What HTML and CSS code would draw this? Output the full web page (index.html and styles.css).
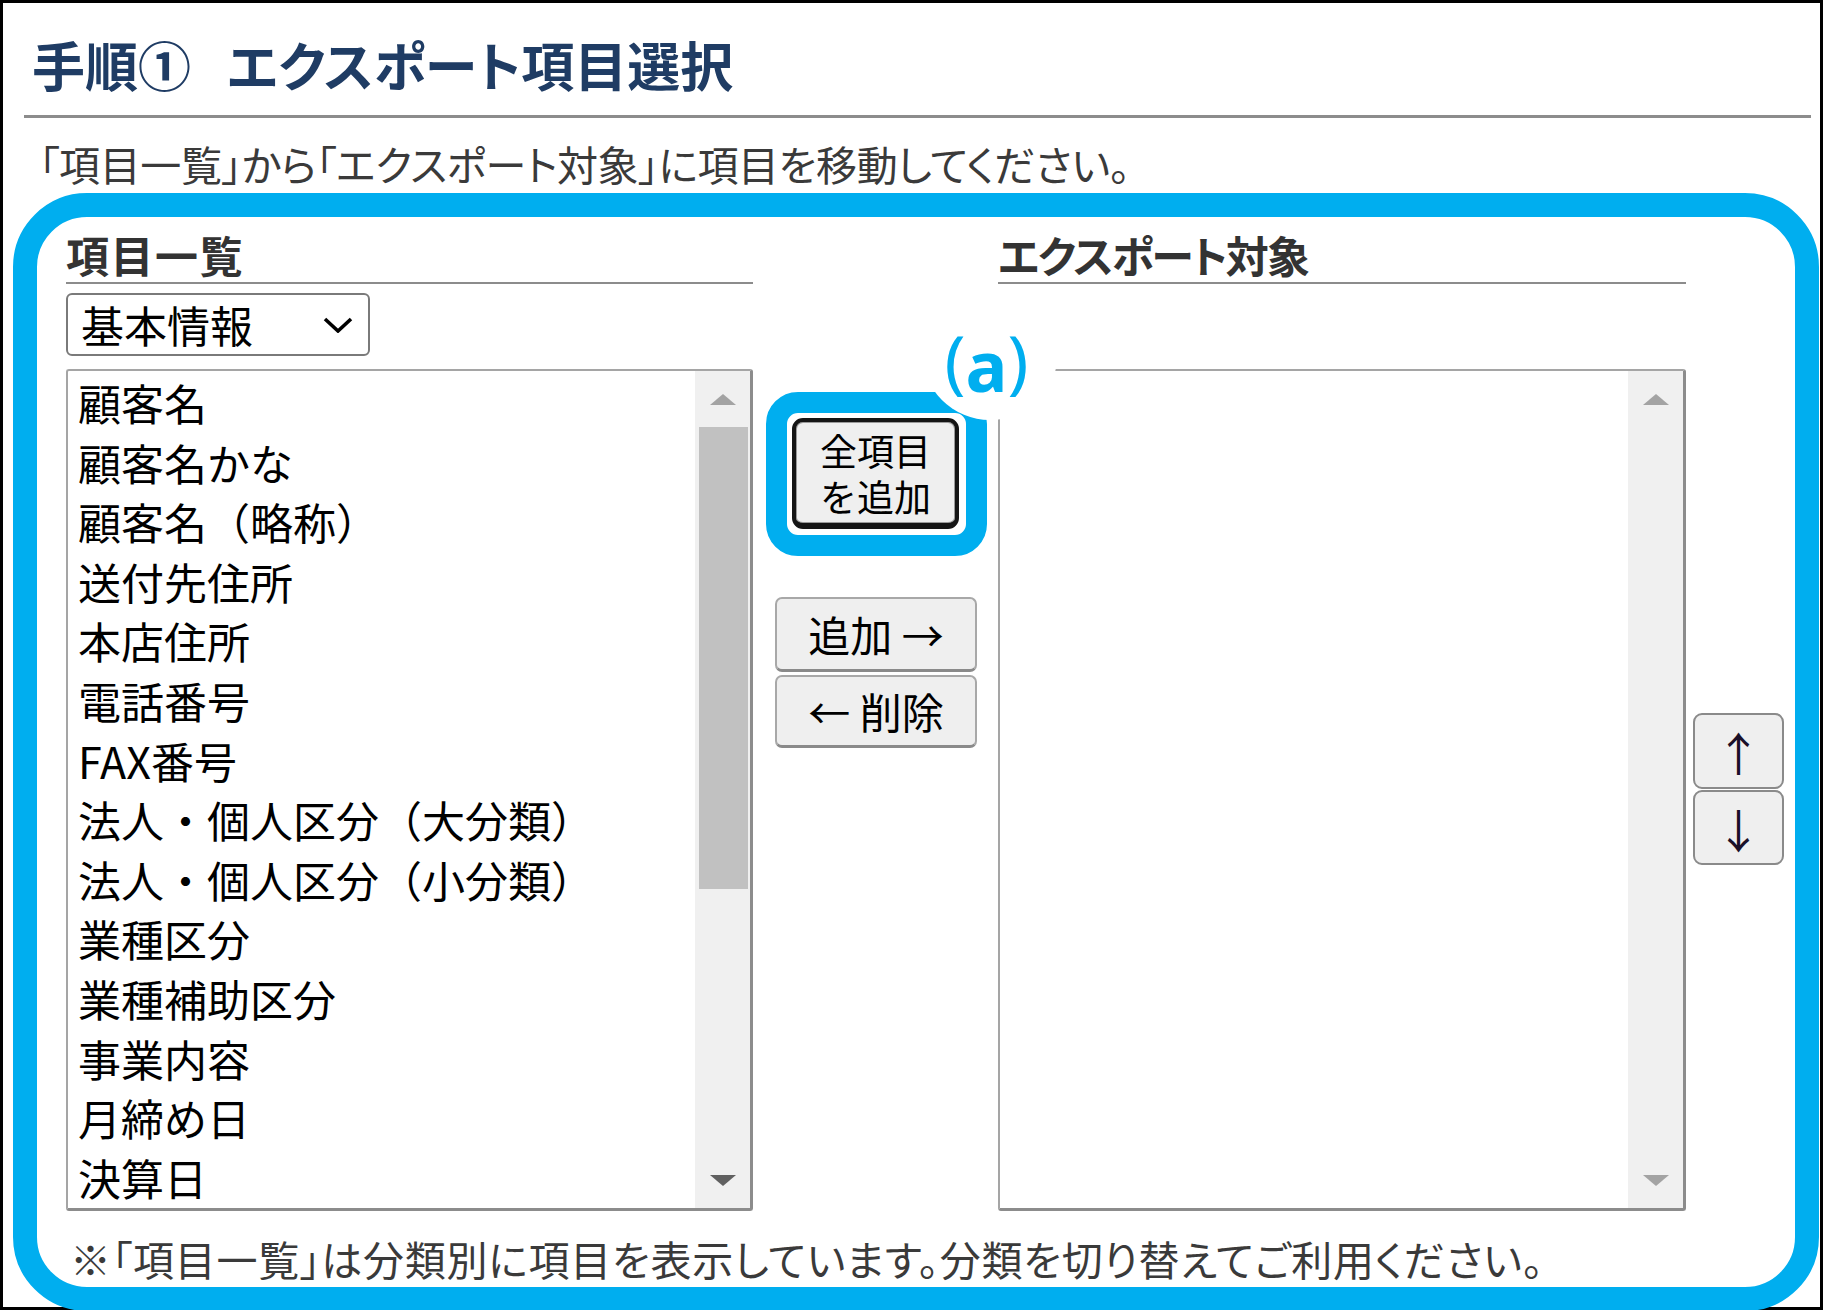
FILE: index.html
```html
<!DOCTYPE html>
<html lang="ja">
<head>
<meta charset="utf-8">
<title>手順① エクスポート項目選択</title>
<link rel="stylesheet" href="styles.css">
</head>
<body>
<div class="frame">
  <h1 class="title"><span class="step">手順①</span>エクスポート項目選択</h1>
  <div class="rule"></div>
  <p class="lead">「項目一覧」から「エクスポート対象」に項目を移動してください。</p>
  <section class="panel">
    <div class="cols">
      <div class="col col-src">
        <h2 class="col-head head-src">項目一覧</h2>
        <div class="select">
          <span>基本情報</span>
          <svg class="chev" viewBox="0 0 30 16"><polyline points="2,2 15,14 28,2" fill="none" stroke="#000" stroke-width="3.6"/></svg>
        </div>
        <div class="listbox">
          <ul class="items">
            <li>顧客名</li>
            <li>顧客名かな</li>
            <li>顧客名（略称）</li>
            <li>送付先住所</li>
            <li>本店住所</li>
            <li>電話番号</li>
            <li>FAX番号</li>
            <li>法人・個人区分（大分類）</li>
            <li>法人・個人区分（小分類）</li>
            <li>業種区分</li>
            <li>業種補助区分</li>
            <li>事業内容</li>
            <li>月締め日</li>
            <li>決算日</li>
          </ul>
          <div class="scroll">
            <div class="sbtn"><span class="tri-up"></span></div>
            <div class="thumb"></div>
            <div class="rest"></div>
            <div class="sbtn"><span class="tri-down dark"></span></div>
          </div>
        </div>
      </div>
      <div class="col col-mid">
        <div class="focus-box">
          <button class="btn btn-all"><span>全項目</span><span>を追加</span></button>
          <div class="badge">(<b>a</b>)</div>
        </div>
        <div class="move-pair">
          <button class="btn btn-move">追加 →</button>
          <button class="btn btn-move second">← 削除</button>
        </div>
      </div>
      <div class="col col-dst">
        <h2 class="col-head head-dst">エクスポート対象</h2>
        <div class="listbox listbox-dst">
          <ul class="items"></ul>
          <div class="scroll">
            <div class="sbtn"><span class="tri-up"></span></div>
            <div class="rest"></div>
            <div class="sbtn"><span class="tri-down"></span></div>
          </div>
        </div>
      </div>
      <div class="col col-order">
        <button class="btn btn-order">↑</button>
        <button class="btn btn-order second">↓</button>
      </div>
    </div>
    <p class="note">※「項目一覧」は分類別に項目を表示しています。分類を切り替えてご利用ください。</p>
  </section>
</div>
</body>
</html>
```
FILE: styles.css
```css
html, body {
  margin: 0;
  padding: 0;
  background: #fff;
}
body {
  font-family: "Noto Sans CJK JP", "Noto Sans", sans-serif;
  color: #000;
}
.frame {
  width: 1823px;
  height: 1310px;
  box-sizing: border-box;
  border: 3px solid #000;
}
.title {
  margin: 35px 0 0 29px;
  font-size: 53px;
  line-height: 53px;
  font-weight: 700;
  color: #1f3c64;
  font-feature-settings: "palt";
}
.title .step {
  margin-right: 36px;
}
.rule {
  height: 3px;
  background: #8c8c8c;
  margin: 24px 9px 0 21px;
}
.lead {
  margin: 25px 0 0 36px;
  font-size: 41px;
  line-height: 41px;
  color: #3a3a3a;
  letter-spacing: -0.4px;
  font-feature-settings: "palt";
}
.panel {
  margin: 9px 1px 0 10px;
  height: 1118px;
  box-sizing: border-box;
  border: 24px solid #00aeef;
  border-radius: 74px;
}
.cols {
  display: flex;
  padding: 16px 0 0 29px;
}
.col-src { width: 687px; }
.col-mid { width: 245px; }
.col-dst { width: 688px; }
.col-order {
  width: 91px;
  margin-left: 7px;
  padding-top: 480px;
  display: flex;
  flex-direction: column;
  gap: 1px;
}
.col-head {
  margin: 0;
  font-size: 43px;
  line-height: 42px;
  font-weight: 700;
  color: #333;
  padding-bottom: 7px;
  border-bottom: 2px solid #8c8c8c;
  font-feature-settings: "palt";
}
.head-src {
  letter-spacing: 1.5px;
}
.head-dst {
  letter-spacing: -1.8px;
}
.select {
  margin-top: 9px;
  width: 304px;
  height: 63px;
  box-sizing: border-box;
  border: 2px solid #7a7a7a;
  border-radius: 6px;
  display: flex;
  align-items: center;
  padding: 0 15px 0 13px;
  font-size: 43px;
  line-height: 1;
}
.chev {
  margin-left: auto;
  width: 30px;
  height: 16px;
}
.listbox {
  margin-top: 13px;
  height: 842px;
  box-sizing: border-box;
  border: 2px solid #a5a5a5;
  border-right: 3px solid #8c8c8c;
  border-bottom: 3px solid #8c8c8c;
  border-radius: 3px;
  display: flex;
}
.listbox-dst {
  margin-top: 85px;
}
.items {
  flex: 1;
  list-style: none;
  margin: 0;
  padding: 2px 0 0 10px;
  font-size: 43px;
  line-height: 59.6px;
  white-space: nowrap;
  overflow: hidden;
}
.scroll {
  width: 55px;
  background: #f0f0f0;
  display: flex;
  flex-direction: column;
}
.sbtn {
  height: 56px;
  display: flex;
  align-items: center;
  justify-content: center;
}
.tri-up {
  width: 0;
  height: 0;
  border-left: 13px solid transparent;
  border-right: 13px solid transparent;
  border-bottom: 11px solid #a3a3a3;
}
.tri-down {
  width: 0;
  height: 0;
  border-left: 13px solid transparent;
  border-right: 13px solid transparent;
  border-top: 11px solid #a3a3a3;
}
.tri-down.dark {
  border-top-color: #606060;
}
.thumb {
  height: 462px;
  margin: 0 2px 0 4px;
  background: #c1c1c1;
}
.rest {
  flex: 1;
}
.btn {
  font-family: inherit;
  color: #000;
  background: #efefef;
  padding: 0;
  margin: 0;
  box-sizing: border-box;
  display: flex;
  flex-direction: column;
  align-items: center;
  justify-content: center;
}
.focus-box {
  position: relative;
  margin: 159px 0 0 13px;
  width: 221px;
  height: 164px;
  box-sizing: border-box;
  border: 21px solid #00aeef;
  border-radius: 32px;
  padding: 5px;
}
.btn-all {
  width: 167px;
  height: 111px;
  border: 4px solid #151515;
  border-bottom-width: 6px;
  border-radius: 11px;
  box-shadow: inset 0 0 0 1px #9a9a9a;
  font-size: 37px;
  line-height: 46px;
}
.btn-all span {
  display: block;
}
.badge {
  position: absolute;
  left: 135px;
  top: -129px;
  width: 136px;
  height: 136px;
  box-sizing: border-box;
  border-radius: 50%;
  background: #fff;
  text-align: center;
  padding: 40px 7px 0 0;
  font-family: "Noto Sans", sans-serif;
  font-size: 70px;
  line-height: 70px;
  color: #00aeef;
}
.badge b {
  font-weight: 700;
  vertical-align: -6px;
}
.move-pair {
  margin: 41px 0 0 22px;
  width: 202px;
  display: flex;
  flex-direction: column;
  gap: 3px;
}
.btn-move {
  width: 202px;
  height: 75px;
  border: 2px solid #a8a8a8;
  border-bottom: 3px solid #8a8a8a;
  border-radius: 7px;
  font-size: 42px;
  line-height: 1;
}
.btn-move.second {
  height: 73px;
}
.btn-order {
  width: 91px;
  height: 76px;
  border: 2px solid #8a8a8a;
  border-radius: 9px;
  font-size: 46px;
  line-height: 1;
  color: #1a1028;
}
.btn-order.second {
  height: 75px;
}
.note {
  margin: 27px 0 0 33px;
  font-size: 41px;
  line-height: 41px;
  color: #3a3a3a;
  letter-spacing: 0.75px;
  font-feature-settings: "palt";
}
```
